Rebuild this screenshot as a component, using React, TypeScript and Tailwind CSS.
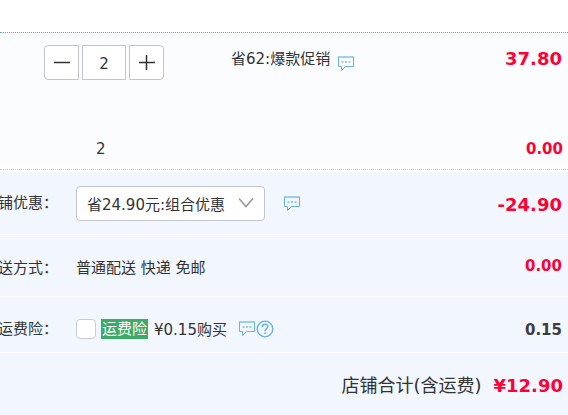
import { useState, type ReactNode } from 'react'

const SOFT_BLUE = '#62b2e4'

export default function App() {
  const [quantity, setQuantity] = useState('2')
  const [insured, setInsured] = useState(false)

  const step = (delta: number) => setQuantity((q) => String(Math.max(1, (Number(q) || 0) + delta)))

  return (
    <main className="min-h-screen overflow-x-hidden bg-[#f1f6ff] font-['DejaVu_Sans','Noto_Sans_CJK_SC',sans-serif] text-[15px] leading-5 text-[#333]">
      <div className="h-8 bg-white" />

      <section className="border-t border-dotted border-[#5aa5ff] bg-[#fbfcff]">
        <div className="flex items-start pt-3 pr-1.5 pl-11">
          <div className="flex gap-[3px]">
            <StepButton label="减少数量" className="rounded-l" onClick={() => step(-1)}>
              <path d="M9 16.5h16" />
            </StepButton>
            <input
              aria-label="数量"
              value={quantity}
              onChange={(e) => setQuantity(e.target.value)}
              className="h-[35px] w-11 border border-[#c2c4d0] bg-white pt-0.5 text-center outline-none"
            />
            <StepButton label="增加数量" className="rounded-r" onClick={() => step(1)}>
              <path d="M9 16.5h16M16.5 9v15" />
            </StepButton>
          </div>
          <div className="ml-[67px] flex gap-2 pt-1">
            <span>省62:爆款促销</span>
            <BubbleIcon className="mt-[7px]" />
          </div>
          <Price className="pt-1 text-[18px] text-[#ff0036]">37.80</Price>
        </div>
        <div className="flex items-center pt-[59px] pr-[5px] pb-[7px] pl-24">
          <span>2</span>
          <Price className="text-[#ff0036]">0.00</Price>
        </div>
      </section>

      <div className="h-1.5 border-b-2 border-white bg-white">
        <div className="h-1 border-b border-dotted border-[#c4c8cb]" />
      </div>

      <Row label="铺优惠：" htmlFor="promotion" className="h-[63px]">
        <div className="relative">
          <select
            id="promotion"
            className="h-[35px] w-[189px] appearance-none rounded border border-[#c2c4d0] bg-white pt-1 pl-2.5 outline-none"
          >
            <option>省24.90元:组合优惠</option>
          </select>
          <svg
            viewBox="0 0 16 10"
            fill="none"
            stroke="#999"
            strokeWidth="1.5"
            className="pointer-events-none absolute top-3 right-[11px] h-2.5 w-4"
          >
            <path d="M1 .5l7 8 7-8" />
          </svg>
        </div>
        <BubbleIcon className="ml-[19px]" />
        <Price className="pt-1 text-[18px] text-[#ff0036]">-24.90</Price>
      </Row>

      <Row label="送方式：" className="h-[62px] pt-1">
        <span>普通配送 快递 免邮</span>
        <Price className="pb-1 text-[#ff0036]">0.00</Price>
      </Row>

      <Row label="运费险：" htmlFor="insurance" className="h-14 pt-2">
        <input
          id="insurance"
          type="checkbox"
          checked={insured}
          onChange={(e) => setInsured(e.target.checked)}
          className="size-5 appearance-none rounded border border-[#c8cad6] bg-white checked:bg-[#3cab68]"
        />
        <span className="ml-[5px] bg-[#3cab68] px-px text-white">运费险</span>
        <span className="ml-1.5 pt-0.5">¥0.15购买</span>
        <BubbleIcon className="ml-3" />
        <HelpIcon />
        <Price className="pt-0.5 text-[#3c3c3c]">0.15</Price>
      </Row>

      <div className="flex items-center justify-end gap-3 pt-[23px] pr-[5px] pb-5 text-[18px]">
        <span>店铺合计(含运费)</span>
        <strong className="text-[#ff0036]">¥12.90</strong>
      </div>
    </main>
  )
}

type RowProps = { label: string; htmlFor?: string; className: string; children: ReactNode }

function Row({ label, htmlFor, className, children }: RowProps) {
  const labelClass = 'mr-[18px] flex w-[58px] shrink-0 justify-end whitespace-nowrap'
  return (
    <div className={`flex items-center border-b border-white pr-1.5 ${className}`}>
      {htmlFor ? (
        <label htmlFor={htmlFor} className={labelClass}>
          {label}
        </label>
      ) : (
        <span className={labelClass}>{label}</span>
      )}
      {children}
    </div>
  )
}

function Price({ className, children }: { className: string; children: ReactNode }) {
  return <strong className={`ml-auto ${className}`}>{children}</strong>
}

type StepButtonProps = { label: string; className: string; onClick: () => void; children: ReactNode }

function StepButton({ label, className, onClick, children }: StepButtonProps) {
  return (
    <button
      type="button"
      aria-label={label}
      onClick={onClick}
      className={`size-[35px] border border-[#c2c4d0] bg-white ${className}`}
    >
      <svg viewBox="0 0 33 33" fill="none" stroke="#333" strokeWidth="1.5" className="size-full">
        {children}
      </svg>
    </button>
  )
}

function BubbleIcon({ className }: { className: string }) {
  return (
    <svg viewBox="0 0 16 15" fill="none" stroke={SOFT_BLUE} className={`h-[15px] w-4 shrink-0 ${className}`}>
      <path d="M.5 1v9.5h3v4l4-4h8V1" />
      <path d="M0 1h16" strokeWidth="2" opacity=".6" />
      <path d="M3.5 6h2M7 6h2M10.500 6h2" strokeWidth="2" opacity=".6" />
    </svg>
  )
}

function HelpIcon() {
  return (
    <svg viewBox="0 0 18 18" fill="none" stroke={SOFT_BLUE} strokeWidth="1.3" className="ml-px size-[18px] shrink-0">
      <circle cx="9" cy="9" r="7.8" />
      <path d="M6.3 7c0-3.800 5.500-3.700 5.500-.4 0 2-2.700 2.200-2.700 4.700M9.100 12.600v1.500" strokeWidth="1.5" />
    </svg>
  )
}
